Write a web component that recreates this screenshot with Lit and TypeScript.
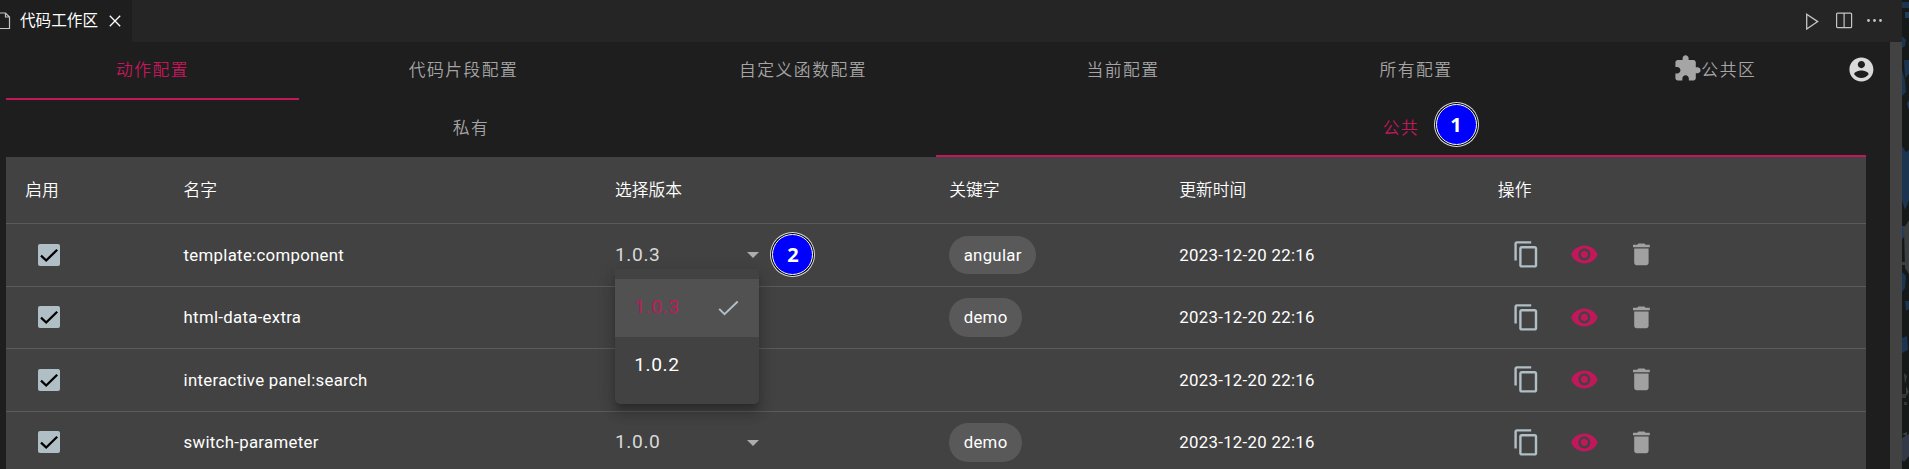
import { LitElement, html, css, svg, nothing } from "lit";
import { customElement, property } from "lit/decorators.js";

const ICONS: Record<string, string> = {
  copy: "M16 1H4c-1.1 0-2 .9-2 2v14h2V3h12V1zm3 4H8c-1.1 0-2 .9-2 2v14c0 1.100.9 2 2 2h11c1.100 0 2-.9 2-2V7c0-1.100-.9-2-2-2zm0 16H8V7h11v14z",
  eye: "M12 4.500C7 4.500 2.730 7.610 1 12c1.730 4.390 6 7.500 11 7.500s9.270-3.110 11-7.500c-1.730-4.390-6-7.500-11-7.500zM12 17c-2.760 0-5-2.240-5-5s2.240-5 5-5 5 2.240 5 5-2.240 5-5 5zm0-8c-1.660 0-3 1.340-3 3s1.340 3 3 3 3-1.340 3-3-1.340-3-3-3z",
  trash: "M6 19c0 1.100.9 2 2 2h8c1.100 0 2-.9 2-2V7H6v12zM19 4h-3.500l-1-1h-5l-1 1H5v2h14V4z",
  puzzle: "M20.500 11H19V7c0-1.100-.9-2-2-2h-4V3.500C13 2.120 11.880 1 10.500 1S8 2.120 8 3.500V5H4c-1.100 0-1.990.9-1.990 2v3.800H3.500c1.490 0 2.700 1.210 2.700 2.700s-1.210 2.700-2.700 2.700H2V20c0 1.100.9 2 2 2h3.800v-1.500c0-1.490 1.210-2.700 2.700-2.700s2.700 1.210 2.700 2.700V22H17c1.100 0 2-.9 2-2v-4h1.500c1.380 0 2.500-1.120 2.500-2.500S21.880 11 20.500 11z",
  account: "M12 2C6.480 2 2 6.480 2 12s4.480 10 10 10 10-4.480 10-10S17.520 2 12 2zm0 3c1.660 0 3 1.340 3 3s-1.340 3-3 3-3-1.340-3-3 1.340-3 3-3zm0 14.200c-2.500 0-4.710-1.280-6-3.220.03-1.990 4-3.080 6-3.080 1.990 0 5.970 1.090 6 3.080-1.290 1.940-3.500 3.220-6 3.220z",
};

@customElement("mat-glyph")
class MatGlyph extends LitElement {
  @property() name = "";
  static styles = css`
    :host { display: block; width: 28.8px; height: 28.8px; flex: none; }
    svg { display: block; width: 100%; height: 100%; fill: currentColor; }
  `;
  render() {
    return html`<svg viewBox="0 0 24 24">${svg`<path d=${ICONS[this.name] ?? ""}></path>`}</svg>`;
  }
}

@customElement("step-marker")
class StepMarker extends LitElement {
  static styles = css`
    :host {
      display: flex; align-items: center; justify-content: center;
      box-sizing: border-box; width: 41px; height: 41px; border-radius: 50%;
      background: #00f; border: 1px solid #fff; color: #fff;
      box-shadow: 0 0 0 1px #000, 0 0 0 2px #ddd;
      font: 700 20px/1 "Noto Sans", sans-serif; letter-spacing: 0;
    }
    span { display: block; padding-top: 1px; }
  `;
  render() {
    return html`<span><slot></slot></span>`;
  }
}

interface Row { name: string; version: string; tag: string; open?: boolean; }

const ROWS: Row[] = [
  { name: "template:component", version: "1.0.3", tag: "angular", open: true },
  { name: "html-data-extra", version: "", tag: "demo" },
  { name: "interactive panel:search", version: "", tag: "" },
  { name: "switch-parameter", version: "1.0.0", tag: "demo" },
];

@customElement("app-root")
class AppRoot extends LitElement {
  static styles = css`
    :host {
      display: flex; width: 1909px; height: 469px; overflow: hidden;
      background: #1e1e1e; color: #fff;
      font-family: Roboto, "Noto Sans CJK SC", sans-serif; font-size: 16.8px;
    }
    * { box-sizing: border-box; }
    .window { width: 1902px; flex: none; display: flex; flex-direction: column; }
    .wallpaper { width: 7px; height: 469px; flex: none; display: block; }

    .titlebar { height: 42px; flex: none; display: flex; background: #252526; }
    .file-tab { width: 132px; height: 42px; background: #1e1e1e; display: flex; align-items: center; font-size: 15.6px; }
    .file-tab .doc { width: 11px; height: 18px; margin-right: 9px; flex: none; }
    .file-tab .label { line-height: 42px; white-space: nowrap; }
    .file-tab .close { width: 12px; height: 12px; margin-left: 11px; flex: none; }
    .tools { margin-left: auto; padding-right: 19px; display: flex; align-items: center; }
    .tools svg { display: block; }
    .play { width: 14px; height: 18px; margin-right: 16px; }
    .split { width: 18px; height: 18px; margin-right: 13px; }
    .dots { width: 17px; height: 18px; }

    .workspace { flex: 1; min-height: 0; display: flex; }
    .content { width: 1890px; padding-left: 6px; flex: none; }
    .scrollbar { width: 12px; background: #424242; }

    .tabs { display: flex; color: #a5a5a5; letter-spacing: 1.5px; font-weight: 350; }
    .tab { display: flex; align-items: center; justify-content: center; border-bottom: 2px solid transparent; white-space: nowrap; }
    .tab.active { color: #c2185b; border-color: #c2185b; }
    .primary { height: 58px; }
    .primary .tab { padding-bottom: 3px; }
    .secondary { height: 57px; width: 1860px; }
    .secondary .tab { flex: 1; padding-bottom: 2px; position: relative; }
    .t1 { width: 293px; } .t2 { width: 329px; } .t3 { width: 350px; }
    .t4 { width: 290px; } .t5 { width: 296px; } .t6 { width: 240px; margin-left: 30.400px; }
    .account { width: 57px; display: flex; justify-content: center; align-items: center; padding-bottom: 4px; color: #d9d9d9; margin-left: -1.400px; }
    .mark-one { position: absolute; left: 499.600px; top: 3.500px; }

    .table { width: 1860px; background: #424242; }
    .row {
      display: grid; grid-template-columns: 158.400px 431.400px 334.300px 230px 318.600px 1fr;
      padding-left: 19.200px; align-items: center; border-bottom: 1px solid #5a5a5a; height: 63px;
    }
    .row.head { height: 67px; padding-bottom: 2px; font-weight: 350; }
    .row.even { height: 62px; }
    .name, .time { letter-spacing: 0.300px; }
    .even .name, .even .time { margin-top: -1px; }
    .box { width: 22px; height: 22px; margin-left: 13px; display: block; border-radius: 2px; background: #b0bec5; }
    .even .box { margin-top: -1px; }
    .version { position: relative; width: 144px; display: flex; align-items: center; justify-content: space-between; font-size: 19.200px; color: #d9d9d9; letter-spacing: 0.600px; height: 30px; }
    .version > span { margin-top: -2px; }
    .arrow { width: 12px; height: 6px; display: block; fill: #adadad; }
    .menu {
      position: absolute; z-index: 2; left: 0; top: 29px; width: 144px; padding: 10px 0 9px;
      background: #424242; border-radius: 0 0 5px 5px; color: #fff;
      box-shadow: 0 6px 6px -3px rgba(0,0,0,.2), 0 10px 12px 1px rgba(0,0,0,.14), 0 4px 17px 2px rgba(0,0,0,.12);
    }
    .option { height: 58px; padding: 0 19px 0 19.200px; display: flex; align-items: center; justify-content: space-between; }
    .option span { margin-top: -3px; }
    .option.selected { background: #515151; color: #c2185b; }
    .option svg { width: 22px; height: 17px; display: block; }
    .mark-two { position: absolute; left: 157.500px; top: -6px; color: #fff; }
    .chip { display: inline-flex; align-items: center; height: 38.400px; padding: 0 14.400px; border-radius: 19.200px; background: #595959; letter-spacing: 0.300px; }
    .actions { display: flex; margin-top: -1px; }
    .actions mat-glyph { margin: 0 14.400px; }
    .c-copy { color: #b0bec5; } .c-eye { color: #c2185b; } .c-trash { color: #a1a1a1; }
  `;

  private renderVersion(row: Row) {
    if (!row.version) return html`<div></div>`;
    return html`<div class="version">
      <span>${row.version}</span>
      <svg class="arrow" viewBox="0 0 12 6"><path d="M0 0h12L6 6z"></path></svg>
      ${row.open
        ? html`<step-marker class="mark-two">2</step-marker>
            <div class="menu">
              <div class="option selected"><span>1.0.3</span>
                <svg viewBox="0 0 22 17" fill="none" stroke="#b0bec5" stroke-width="2"><path d="M1.200 8.900l5.300 5.300L19.700 1.500"></path></svg>
              </div>
              <div class="option"><span>1.0.2</span></div>
            </div>`
        : nothing}
    </div>`;
  }

  private renderRow(row: Row, i: number) {
    return html`<div class="row ${i % 2 ? "even" : ""}">
      <svg class="box" viewBox="0 0 22 22"><path d="M3 11.600l5.200 4.900L19.200 5.700" fill="none" stroke="#000" stroke-width="2.300"></path></svg>
      <div class="name">${row.name}</div>
      ${this.renderVersion(row)}
      <div>${row.tag ? html`<span class="chip">${row.tag}</span>` : nothing}</div>
      <div class="time">2023-12-20 22:16</div>
      <div class="actions">
        <mat-glyph class="c-copy" name="copy"></mat-glyph>
        <mat-glyph class="c-eye" name="eye"></mat-glyph>
        <mat-glyph class="c-trash" name="trash"></mat-glyph>
      </div>
    </div>`;
  }

  render() {
    return html`
      <div class="window">
        <div class="titlebar">
          <div class="file-tab">
            <svg class="doc" viewBox="0 0 11 18" fill="none" stroke="#c5c5c5" stroke-width="1.200"><path d="M0 1h5.500l4 4v11.500H0M5.500 1v4h4"></path></svg>
            <span class="label">代码工作区</span>
            <svg class="close" viewBox="0 0 12 12" stroke="#fff" stroke-width="1.300"><path d="M.8.8l10.400 10.400M11.200.8L.8 11.200"></path></svg>
          </div>
          <div class="tools">
            <svg class="play" viewBox="0 0 14 18" fill="none" stroke="#c5c5c5" stroke-width="1.300"><path d="M1.700 2.200L12.700 9.600L1.700 17z"></path></svg>
            <svg class="split" viewBox="0 0 18 18" fill="none" stroke="#c5c5c5" stroke-width="1.200"><rect x="1.600" y="1.100" width="15" height="14.600" rx="1"></rect><path d="M9.100 1v14.700"></path></svg>
            <svg class="dots" viewBox="0 0 17 18" fill="#c5c5c5"><circle cx="2.500" cy="8.500" r="1.400"></circle><circle cx="8.500" cy="8.500" r="1.400"></circle><circle cx="14.500" cy="8.500" r="1.400"></circle></svg>
          </div>
        </div>
        <div class="workspace">
          <div class="content">
            <div class="tabs primary">
              <div class="tab t1 active">动作配置</div>
              <div class="tab t2">代码片段配置</div>
              <div class="tab t3">自定义函数配置</div>
              <div class="tab t4">当前配置</div>
              <div class="tab t5">所有配置</div>
              <div class="tab t6"><mat-glyph name="puzzle"></mat-glyph><span>公共区</span></div>
              <div class="account"><mat-glyph name="account"></mat-glyph></div>
            </div>
            <div class="tabs secondary">
              <div class="tab">私有</div>
              <div class="tab active">公共<step-marker class="mark-one">1</step-marker></div>
            </div>
            <div class="table">
              <div class="row head">
                <div>启用</div><div>名字</div><div>选择版本</div><div>关键字</div><div>更新时间</div><div>操作</div>
              </div>
              ${ROWS.map((r, i) => this.renderRow(r, i))}
            </div>
          </div>
          <div class="scrollbar"></div>
        </div>
      </div>
      <svg class="wallpaper" viewBox="0 0 7 469">
        <rect width="7" height="469" fill="#151917"></rect>
        <path fill="#1b3550" d="M0 2h7v6H0zM0 36l4 4-1 6-3 2zM2 60h5v14l-4 4zM0 70l3 10 1 12-4 4zM0 146l4 6 3-2v50l-4 10-3-10zM0 272l4 4-1 12-3 4zM3 301h4v8l-3 2zM0 338l5-2 1 14-6 3z"></path>
        <path fill="#223c59" d="M3 12h4v6H3zM5 104l2-4v10zM0 226h3v10l-3 3z"></path>
        <path fill="#3b3f40" d="M2 228l5-8v54l-4-6zM0 262h4v3H0zM2 373l3 3-2 8zM4 386l3 6-3 4zM0 434l5-2v4z"></path>
        <path fill="#35372b" d="M0 394h4v4H0zM2 402h3v3H2z"></path>
        <path fill="#333947" d="M0 438l7-4v22l-5 6-2-2z"></path>
      </svg>
    `;
  }
}
